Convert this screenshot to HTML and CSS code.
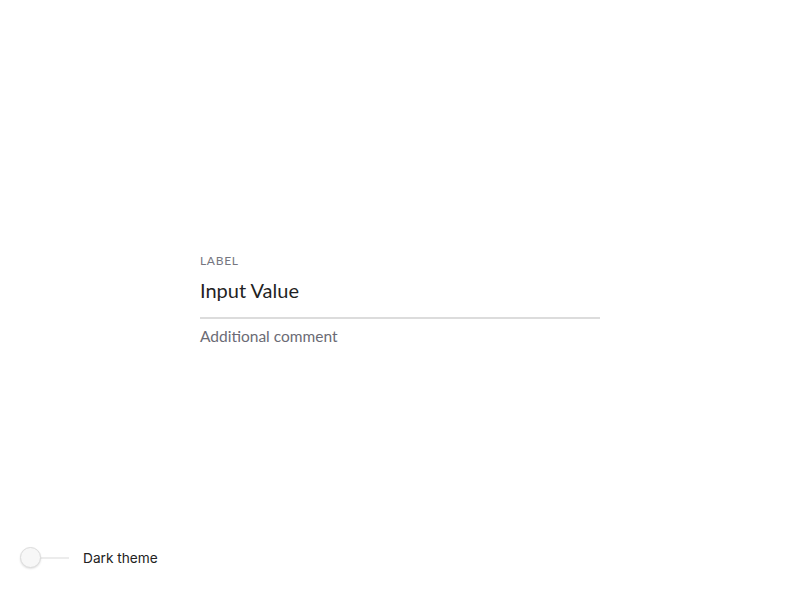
FILE: index.html
```html
<!DOCTYPE html>
<html>
<head>
<meta charset="utf-8">
<link rel="stylesheet" href="styles.css">
</head>
<body>
<main class="stage">
  <div class="field">
    <div class="field-label">LABEL</div>
    <div class="field-value">Input Value</div>
    <div class="field-comment">Additional comment</div>
  </div>
</main>
<footer class="theme-bar">
  <div class="toggle"><span class="toggle-track"></span><span class="toggle-knob"></span></div>
  <span class="toggle-text">Dark theme</span>
</footer>
</body>
</html>
```
FILE: styles.css
```css
html, body { margin: 0; padding: 0; background: #fff; }
body { width: 800px; height: 600px; position: relative; font-family: Lato, "Noto Sans", sans-serif; }
.stage { height: 600px; display: flex; align-items: center; justify-content: center; }
.field { width: 400px; }
.field-label { font-size: 12px; color: #76767f; letter-spacing: 0.7px; line-height: 14px; }
.field-value { font-size: 20px; color: #1f1f24; line-height: 24px; margin-top: 10px; padding-bottom: 15px; border-bottom: 2px solid #dcdcdc; }
.field-comment { font-size: 15.5px; color: #6b6b75; line-height: 18px; margin-top: 8px; margin-bottom: 2px; }
.theme-bar { position: absolute; left: 20px; bottom: 31px; display: flex; align-items: center; gap: 13px; }
.toggle { position: relative; width: 50px; height: 22px; }
.toggle-track { position: absolute; left: 10px; right: 1px; top: 10px; height: 2px; background: #ececec; }
.toggle-knob { position: absolute; left: 0; top: 0; width: 21px; height: 21px; border-radius: 50%; background: #f7f7f7; border: 1px solid #dcdcdc; box-sizing: border-box; box-shadow: 0 1px 2px rgba(0,0,0,0.12); }
.toggle-text { font-family: Inter, "Noto Sans", sans-serif; font-size: 13.7px; color: #222; }
```
